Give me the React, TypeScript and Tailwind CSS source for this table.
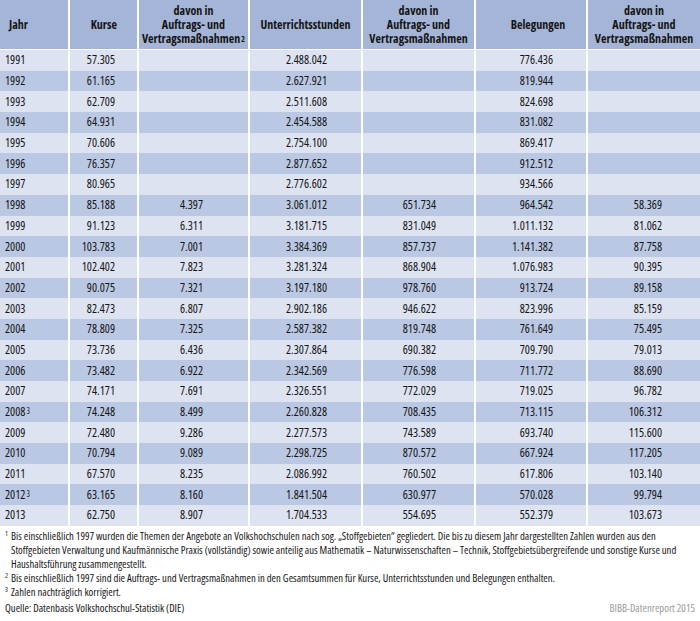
import React from "react";

type Row = { y: string; sup?: string; k: string; ka: string; u: string; ua: string; b: string; ba: string };

const rows: Row[] = [
  { y: "1991", k: "57.305", ka: "", u: "2.488.042", ua: "", b: "776.436", ba: "" },
  { y: "1992", k: "61.165", ka: "", u: "2.627.921", ua: "", b: "819.944", ba: "" },
  { y: "1993", k: "62.709", ka: "", u: "2.511.608", ua: "", b: "824.698", ba: "" },
  { y: "1994", k: "64.931", ka: "", u: "2.454.588", ua: "", b: "831.082", ba: "" },
  { y: "1995", k: "70.606", ka: "", u: "2.754.100", ua: "", b: "869.417", ba: "" },
  { y: "1996", k: "76.357", ka: "", u: "2.877.652", ua: "", b: "912.512", ba: "" },
  { y: "1997", k: "80.965", ka: "", u: "2.776.602", ua: "", b: "934.566", ba: "" },
  { y: "1998", k: "85.188", ka: "4.397", u: "3.061.012", ua: "651.734", b: "964.542", ba: "58.369" },
  { y: "1999", k: "91.123", ka: "6.311", u: "3.181.715", ua: "831.049", b: "1.011.132", ba: "81.062" },
  { y: "2000", k: "103.783", ka: "7.001", u: "3.384.369", ua: "857.737", b: "1.141.382", ba: "87.758" },
  { y: "2001", k: "102.402", ka: "7.823", u: "3.281.324", ua: "868.904", b: "1.076.983", ba: "90.395" },
  { y: "2002", k: "90.075", ka: "7.321", u: "3.197.180", ua: "978.760", b: "913.724", ba: "89.158" },
  { y: "2003", k: "82.473", ka: "6.807", u: "2.902.186", ua: "946.622", b: "823.996", ba: "85.159" },
  { y: "2004", k: "78.809", ka: "7.325", u: "2.587.382", ua: "819.748", b: "761.649", ba: "75.495" },
  { y: "2005", k: "73.736", ka: "6.436", u: "2.307.864", ua: "690.382", b: "709.790", ba: "79.013" },
  { y: "2006", k: "73.482", ka: "6.922", u: "2.342.569", ua: "776.598", b: "711.772", ba: "88.690" },
  { y: "2007", k: "74.171", ka: "7.691", u: "2.326.551", ua: "772.029", b: "719.025", ba: "96.782" },
  { y: "2008", sup: "3", k: "74.248", ka: "8.499", u: "2.260.828", ua: "708.435", b: "713.115", ba: "106.312" },
  { y: "2009", k: "72.480", ka: "9.286", u: "2.277.573", ua: "743.589", b: "693.740", ba: "115.600" },
  { y: "2010", k: "70.794", ka: "9.089", u: "2.298.725", ua: "870.572", b: "667.924", ba: "117.205" },
  { y: "2011", k: "67.570", ka: "8.235", u: "2.086.992", ua: "760.502", b: "617.806", ba: "103.140" },
  { y: "2012", sup: "3", k: "63.165", ka: "8.160", u: "1.841.504", ua: "630.977", b: "570.028", ba: "99.794" },
  { y: "2013", k: "62.750", ka: "8.907", u: "1.704.533", ua: "554.695", b: "552.379", ba: "103.673" },
];

const grid = "grid grid-cols-[68px_69px_111px_113px_113px_112px_114px]";

function Davon({ sup }: { sup?: string }) {
  return (
    <div className="flex flex-col items-center justify-center text-center leading-[14px] border-l-2 border-white whitespace-nowrap">
      <span>davon in</span>
      <span>Auftrags- und</span>
      <span>
        Vertragsmaßnahmen
        {sup ? <sup className="text-[8px] relative -top-[1px] ml-[1px]">{sup}</sup> : null}
      </span>
    </div>
  );
}

export default function App() {
  return (
    <div
      className="w-[700px] h-[621px] bg-white text-[#151515] overflow-hidden font-stretch-75%"
      style={{ fontFamily: '"Open Sans", "DejaVu Sans Condensed", "Liberation Sans", sans-serif' }}
    >
      {/* header */}
      <div className={`${grid} h-[50px] bg-[#a5b5d7] border-b border-white font-bold text-[12px]`}>
        <div className="flex items-center pl-[9px]">Jahr</div>
        <div className="flex items-center justify-end pr-[20px] border-l-2 border-white">Kurse</div>
        <Davon sup="2" />
        <div className="flex items-center justify-center border-l-2 border-white">Unterrichtsstunden</div>
        <Davon />
        <div className="flex items-center justify-center pl-[14px] border-l-2 border-white">Belegungen</div>
        <Davon />
      </div>
      {/* body */}
      {rows.map((r, i) => (
        <div
          key={r.y}
          className={`${grid} h-[20.7px] text-[12px] ${i % 2 === 0 ? "bg-[#dde3f1]" : "bg-[#bac8e3]"}`}
        >
          <div className="flex items-center pl-[5px]">
            {r.y}
            {r.sup ? <sup className="text-[8px] relative top-[-1px] ml-[1px]">{r.sup}</sup> : null}
          </div>
          <div className="flex items-center justify-end pr-[22px] border-l-2 border-white">{r.k}</div>
          <div className="flex items-center justify-end pr-[45px] border-l-2 border-white">{r.ka}</div>
          <div className="flex items-center justify-end pr-[34px] border-l-2 border-white">{r.u}</div>
          <div className="flex items-center justify-end pr-[38px] border-l-2 border-white">{r.ua}</div>
          <div className="flex items-center justify-end pr-[33px] border-l-2 border-white">{r.b}</div>
          <div className="flex items-center justify-end pr-[38px] border-l-2 border-white">{r.ba}</div>
        </div>
      ))}
      {/* footnotes */}
      <div className="pt-[3px] pl-[5px] pr-[2px] text-[10.7px] leading-[14px] text-[#151515]">
        <div className="flex">
          <span className="w-[6px] shrink-0 text-[7px] leading-[10px]">1</span>
          <p>
            Bis einschließlich 1997 wurden die Themen der Angebote an Volkshochschulen nach sog. „Stoffgebieten“ gegliedert. Die bis zu diesem Jahr dargestellten Zahlen wurden aus den Stoffgebieten Verwaltung und Kaufmännische Praxis (vollständig) sowie anteilig aus Mathematik – Naturwissenschaften – Technik, Stoffgebietsübergreifende und sonstige Kurse und Haushaltsführung zusammengestellt.
          </p>
        </div>
        <div className="flex">
          <span className="w-[6px] shrink-0 text-[7px] leading-[10px]">2</span>
          <p>Bis einschließlich 1997 sind die Auftrags- und Vertragsmaßnahmen in den Gesamtsummen für Kurse, Unterrichtsstunden und Belegungen enthalten.</p>
        </div>
        <div className="flex">
          <span className="w-[6px] shrink-0 text-[7px] leading-[10px]">3</span>
          <p>Zahlen nachträglich korrigiert.</p>
        </div>
        <div className="flex justify-between mt-[2px] pr-[3px]">
          <span>Quelle: Datenbasis Volkshochschul-Statistik (DIE)</span>
          <span className="text-[#9a9a9a]">BIBB-Datenreport 2015</span>
        </div>
      </div>
    </div>
  );
}
